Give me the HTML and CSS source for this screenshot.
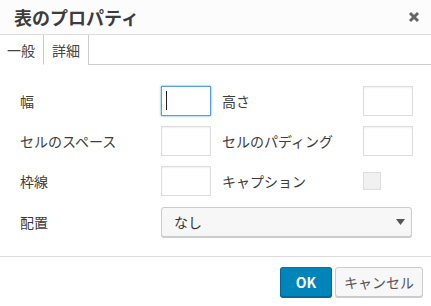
FILE: index.html
```html
<!DOCTYPE html>
<html lang="ja">
<head>
  <meta charset="UTF-8" />
  <title>表のプロパティ</title>
  <link rel="stylesheet" href="styles.css">
</head>
<body>

  <div class="dialogo">
    <div class="cabecalho">
      <div class="titulo">表のプロパティ</div>
      <button class="fechar" type="button" aria-label="閉じる">
        <svg width="12" height="12" viewBox="0 0 12 12">
          <path d="M2 2 L10 10 M10 2 L2 10" stroke="#666" stroke-width="3" stroke-linecap="butt" />
        </svg>
      </button>
    </div>

    <div class="abas">
      <div class="aba ativa">一般</div>
      <div class="aba">詳細</div>
    </div>

    <div class="formulario">
      <label class="rotulo">幅</label>
      <span class="campo foco"><input class="caixa" type="text" /><span class="cursor"></span></span>
      <label class="rotulo dir">高さ</label>
      <span class="campo"><input class="caixa" type="text" /></span>

      <label class="rotulo">セルのスペース</label>
      <span class="campo"><input class="caixa" type="text" /></span>
      <label class="rotulo dir">セルのパディング</label>
      <span class="campo"><input class="caixa" type="text" /></span>

      <label class="rotulo">枠線</label>
      <span class="campo"><input class="caixa" type="text" /></span>
      <label class="rotulo dir">キャプション</label>
      <span class="campo"><input class="marcar" type="checkbox" /></span>

      <label class="rotulo linha-sel">配置</label>
      <div class="seletor linha-sel">
        <span>なし</span>
        <svg width="9" height="6" viewBox="0 0 9 6"><path d="M0 0 H9 L4.5 6 Z" fill="#555" /></svg>
      </div>
    </div>

    <div class="rodape">
      <button class="botao primario" type="button">OK</button>
      <button class="botao cancelar" type="button">キャンセル</button>
    </div>
  </div>

</body>
</html>
```

FILE: styles.css
```css
body {
  font-family: 'Noto Sans CJK JP', 'Noto Sans', sans-serif;
  background: #fff;
  margin: 0;
  color: #444;
}

.dialogo {
  width: 431px;
  height: 306px;
  background: #fff;
  overflow: hidden;
}

.cabecalho {
  height: 35px;
  box-sizing: border-box;
  background: #fcfcfc;
  border-bottom: 1px solid #ddd;
  display: flex;
  align-items: center;
  justify-content: space-between;
  padding: 0 11px 0 14px;
}

.titulo {
  font-size: 18px;
  font-weight: bold;
  color: #3c3c3c;
  line-height: 1;
}

.fechar {
  border: 0;
  background: none;
  padding: 0;
  width: 12px;
  height: 12px;
  display: flex;
}

.abas {
  height: 30px;
  box-sizing: border-box;
  border-bottom: 1px solid #ccc;
  display: flex;
}

.aba {
  font-size: 14px;
  color: #444;
  width: 45px;
  padding-left: 8px;
  height: 30px;
  box-sizing: border-box;
  display: flex;
  align-items: center;
  border-right: 1px solid #ccc;
  background: #fff;
}

.aba.ativa {
  width: 44px;
  padding-left: 7px;
  border-bottom: 1px solid #fff;
}

.formulario {
  display: grid;
  grid-template-columns: 141px 50px 152px 50px;
  row-gap: 10px;
  padding: 21px 0 19px 20px;
  border-bottom: 1px solid #ddd;
}

.rotulo {
  font-size: 14px;
  color: #3c3c3c;
  display: flex;
  align-items: center;
  height: 30px;
}

.rotulo.dir {
  padding-left: 11px;
}

.campo {
  position: relative;
  display: flex;
  align-items: center;
  height: 30px;
}

.caixa {
  width: 50px;
  height: 30px;
  box-sizing: border-box;
  margin: 0;
  border: 1px solid #ddd;
  box-shadow: inset 0 1px 2px rgba(0,0,0,0.07);
  background: #fff;
  padding: 0 4px;
}

.foco .caixa {
  border-color: #5b9dd9;
  box-shadow: 0 0 2px rgba(30,140,190,0.8);
}

.cursor {
  position: absolute;
  left: 5px;
  top: 5px;
  width: 1px;
  height: 19px;
  background: #222;
}

.marcar {
  appearance: none;
  -webkit-appearance: none;
  width: 18px;
  height: 18px;
  margin: 0;
  background: #f1f1f1;
  border: 1px solid #ddd;
  box-sizing: border-box;
}

.linha-sel {
  margin-top: 1px;
}

.seletor {
  grid-column: 2 / 5;
  height: 30px;
  box-sizing: border-box;
  border: 1px solid #ccc;
  border-radius: 3px;
  background: #f7f7f7;
  box-shadow: 0 1px 0 #ccc;
  display: flex;
  align-items: center;
  justify-content: space-between;
  padding: 0 6px 0 12px;
  font-size: 14px;
  color: #333;
  margin-right: 1px;
}

.rodape {
  display: flex;
  justify-content: flex-end;
  gap: 3px;
  padding: 10px 8px 0 0;
}

.botao {
  font-family: inherit;
  height: 30px;
  box-sizing: border-box;
  border: 1px solid #ccc;
  border-radius: 3px;
  background: #f7f7f7;
  box-shadow: 0 1px 0 #ccc;
  color: #555;
  font-size: 14px;
  padding: 0;
  margin: 0;
}

.botao.cancelar {
  width: 88px;
}

.botao.primario {
  width: 52px;
  background: #0085ba;
  border-color: #0073aa #006799 #006799;
  box-shadow: 0 1px 0 #006799;
  color: #fff;
  font-weight: bold;
}
```
